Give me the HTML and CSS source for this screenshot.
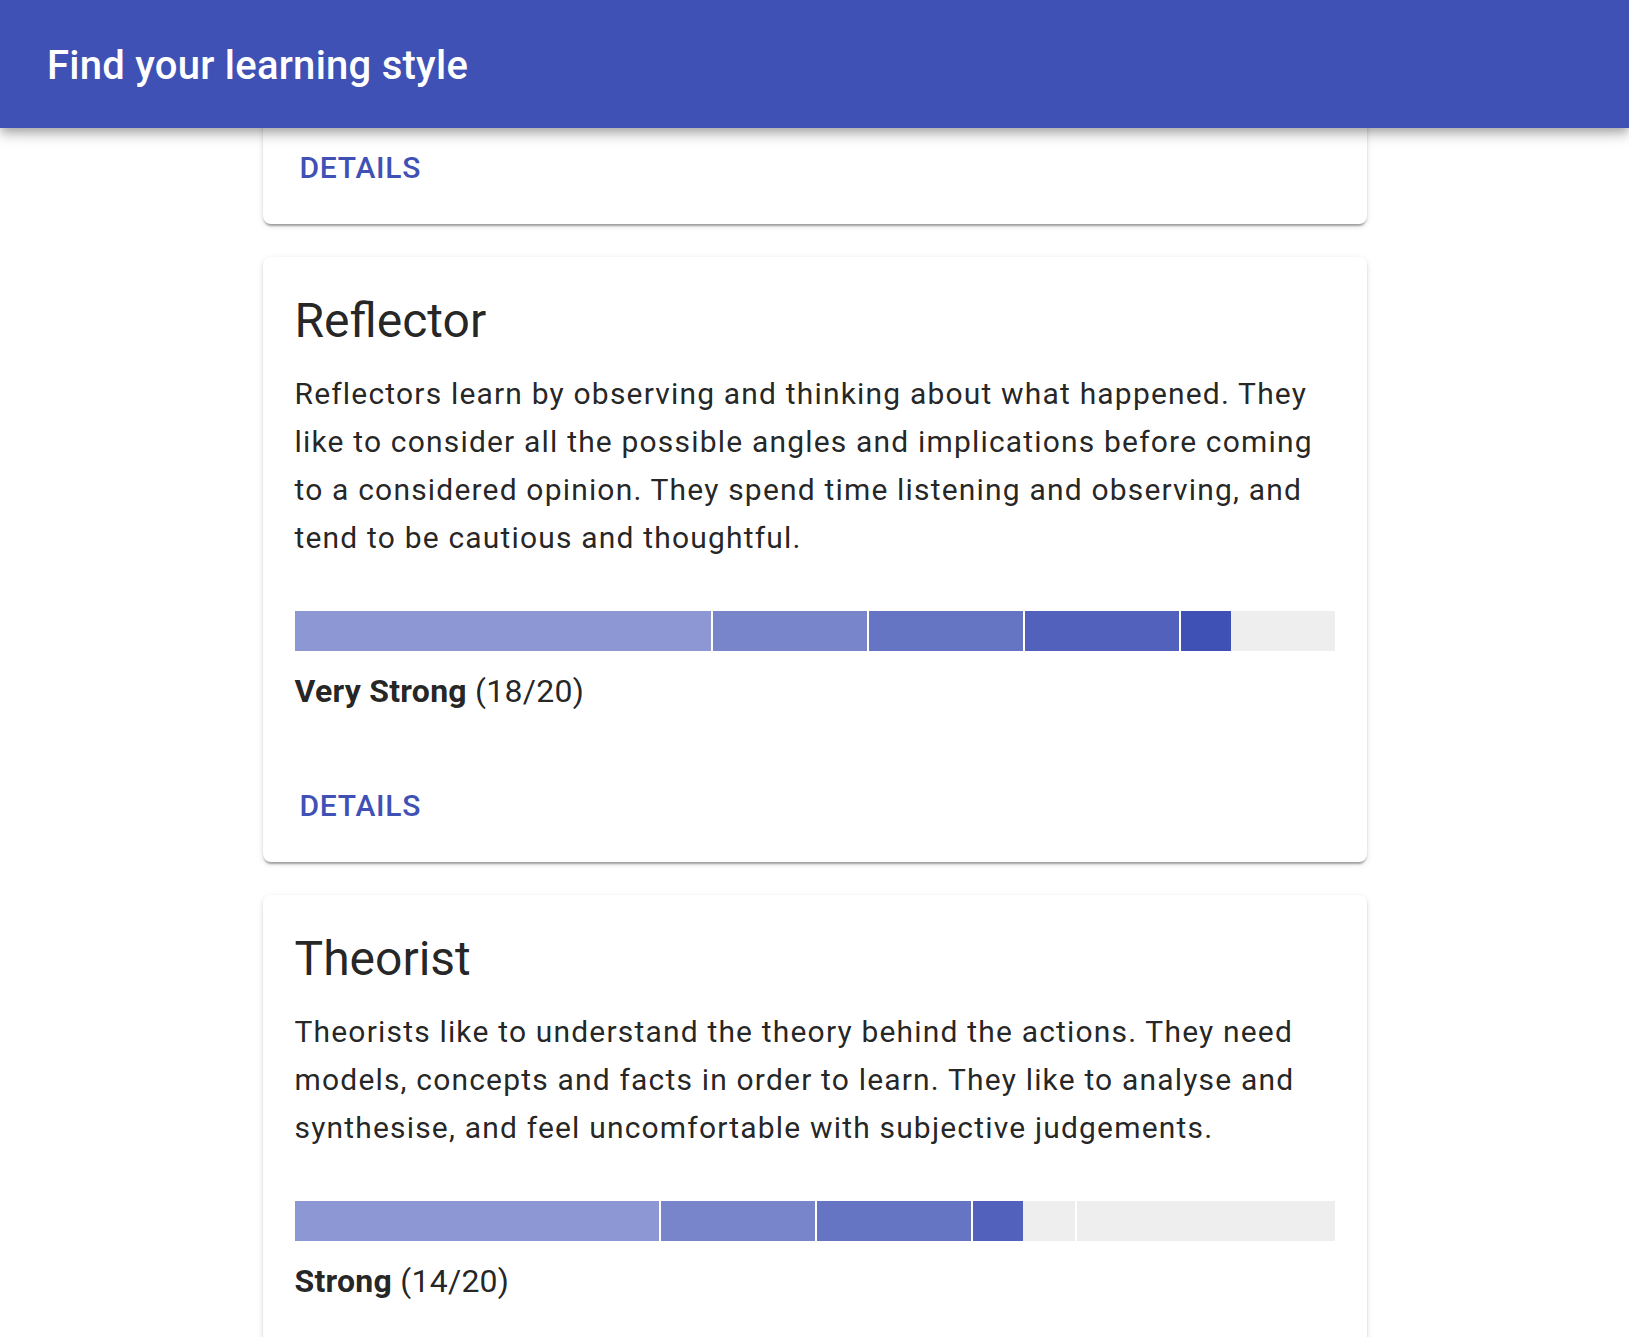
FILE: index.html
```html
<!DOCTYPE html>
<html lang="en">
<head>
<meta charset="utf-8">
<title>Find your learning style</title>
<link rel="stylesheet" href="styles.css">
</head>
<body>
<header class="app-bar">
  <h1 class="app-title">Find your learning style</h1>
</header>
<main class="cards">
  <section class="card">
    <div class="card-actions">
      <button class="btn">Details</button>
    </div>
  </section>

  <section class="card">
    <div class="card-content">
      <h2 class="card-title">Reflector</h2>
      <p class="card-text">Reflectors learn by observing and thinking about what happened. They like to consider all the possible angles and implications before coming to a considered opinion. They spend time listening and observing, and tend to be cautious and thoughtful.</p>
      <div class="meter">
        <div class="band band-1" style="width:40%"><div class="fill" style="width:100%"></div></div>
        <div class="band band-2" style="width:15%"><div class="fill" style="width:calc((100% + 2px) * 3 / 3 - 2px)"></div></div>
        <div class="band band-3" style="width:15%"><div class="fill" style="width:calc((100% + 2px) * 3 / 3 - 2px)"></div></div>
        <div class="band band-4" style="width:15%"><div class="fill" style="width:calc((100% + 2px) * 3 / 3 - 2px)"></div></div>
        <div class="band band-5" style="width:15%"><div class="fill" style="width:calc((100% + 2px) * 1 / 3 - 2px)"></div></div>
      </div>
      <p class="strength"><strong>Very Strong</strong> (18/20)</p>
    </div>
    <div class="card-actions">
      <button class="btn">Details</button>
    </div>
  </section>

  <section class="card">
    <div class="card-content">
      <h2 class="card-title">Theorist</h2>
      <p class="card-text">Theorists like to understand the theory behind the actions. They need models, concepts and facts in order to learn. They like to analyse and synthesise, and feel uncomfortable with subjective judgements.</p>
      <div class="meter">
        <div class="band band-1" style="width:35%"><div class="fill" style="width:100%"></div></div>
        <div class="band band-2" style="width:15%"><div class="fill" style="width:calc((100% + 2px) * 3 / 3 - 2px)"></div></div>
        <div class="band band-3" style="width:15%"><div class="fill" style="width:calc((100% + 2px) * 3 / 3 - 2px)"></div></div>
        <div class="band band-4" style="width:10%"><div class="fill" style="width:calc((100% + 2px) * 1 / 2 - 2px)"></div></div>
        <div class="band band-5" style="width:25%"><div class="fill" style="width:0"></div></div>
      </div>
      <p class="strength"><strong>Strong</strong> (14/20)</p>
    </div>
    <div class="card-actions">
      <button class="btn">Details</button>
    </div>
  </section>
</main>
</body>
</html>
```

FILE: styles.css
```css
html, body {
  margin: 0;
  padding: 0;
  background: #ffffff;
}

body {
  font-family: Roboto, "Noto Sans", "Liberation Sans", sans-serif;
  color: rgba(0, 0, 0, 0.87);
  overflow: hidden;
}

.app-bar {
  position: relative;
  z-index: 2;
  height: 128px;
  background: #3f51b5;
  display: flex;
  align-items: center;
  padding: 2px 0 0 47px;
  box-sizing: border-box;
  box-shadow: 0 4px 8px -2px rgba(0, 0, 0, 0.2),
              0 8px 10px 0 rgba(0, 0, 0, 0.14),
              0 2px 20px 0 rgba(0, 0, 0, 0.12);
}

.app-title {
  margin: 0;
  font-size: 40px;
  font-weight: 500;
  letter-spacing: 0.25px;
  color: #ffffff;
}

.cards {
  width: 1104px;
  margin: -13px auto 0;
  display: flex;
  flex-direction: column;
  gap: 33px;
}

.card {
  background: #ffffff;
  border-radius: 8px;
  box-shadow: 0 4px 2px -2px rgba(0, 0, 0, 0.2),
              0 2px 2px 0 rgba(0, 0, 0, 0.14),
              0 2px 6px 0 rgba(0, 0, 0, 0.12);
}

.card-content {
  padding: 32px 32px 0;
}

.card-title {
  margin: 0 0 17px;
  font-size: 48px;
  line-height: 64px;
  font-weight: 400;
}

.card-text {
  margin: 0 0 49px;
  font-size: 30px;
  line-height: 48px;
  letter-spacing: 1.18px;
}

.meter {
  display: flex;
  height: 40px;
}

.band {
  box-sizing: border-box;
  border-left: 2px solid #ffffff;
  background: #eeeeee;
  display: flex;
}

.band-1 {
  border-left: none;
}

.fill {
  height: 100%;
}

.band-1 .fill { background: #8c97d3; }
.band-2 .fill { background: #7985cb; }
.band-3 .fill { background: #6674c4; }
.band-4 .fill { background: #5262bc; }
.band-5 .fill { background: #3f51b5; }

.strength {
  margin: 16px 0 38px;
  font-size: 32px;
  line-height: 48px;
  letter-spacing: 0.25px;
}

.strength strong {
  font-weight: 700;
}

.card-actions {
  padding: 16px 16px 21px;
  display: flex;
}

.btn {
  height: 72px;
  padding: 0 21px;
  border: none;
  background: transparent;
  font-family: Roboto, "Noto Sans", "Liberation Sans", sans-serif;
  font-size: 30px;
  font-weight: 500;
  letter-spacing: 0.75px;
  text-transform: uppercase;
  color: #3f51b5;
  border-radius: 8px;
  cursor: pointer;
}
```
